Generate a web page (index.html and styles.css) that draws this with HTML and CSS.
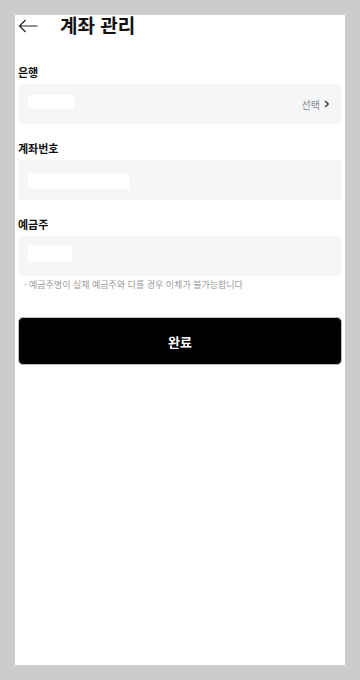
FILE: index.html
```html
<!DOCTYPE html>
<html lang="ko">
  <head>
    <meta charset="UTF-8" />
    <title>계좌 관리</title>
    <meta name="viewport" content="width=device-width, initial-scale=1" />
    <link rel="stylesheet" href="styles.css">
  </head>
  <body>
    <div class="screen">
      <div class="header">
        <svg class="back" width="20" height="14" viewBox="0 0 20 14">
          <path d="M19.5 7H1.5M7.5 1L1.5 7l6 6" fill="none" stroke="#222" stroke-width="1.2" />
        </svg>
        <h1>계좌 관리</h1>
      </div>

      <div class="label">은행</div>
      <div class="field">
        <span class="value" style="width:46px;height:14px"></span>
        <span class="select">선택
          <svg width="6" height="8" viewBox="0 0 6 8">
            <path d="M1.2 1l3 3-3 3" fill="none" stroke="#333" stroke-width="1.4" />
          </svg>
        </span>
      </div>

      <div class="label">계좌번호</div>
      <div class="field">
        <span class="value" style="width:101px;height:15px;margin-top:2px"></span>
      </div>

      <div class="label">예금주</div>
      <div class="field">
        <span class="value" style="width:44px;height:16px"></span>
      </div>
      <div class="note">· 예금주명이 실제 예금주와 다를 경우 이체가 불가능합니다</div>

      <button class="done">완료</button>
    </div>
  </body>
</html>
```

FILE: styles.css
```css
body {
  margin: 0;
  padding: 15px;
  background: #cccccc;
  font-family: "Noto Sans CJK KR", "Noto Sans", sans-serif;
}

.screen {
  width: 324px;
  height: 650px;
  padding: 0 3px;
  background: #fff;
  display: flex;
  flex-direction: column;
}

.header {
  height: 20px;
  display: flex;
  align-items: center;
}

.back {
  margin-top: 1px;
}

h1 {
  margin: 0 0 0 22px;
  font-size: 19px;
  line-height: 20px;
  font-weight: 700;
  color: #111;
}

.label {
  margin-top: 17px;
  font-size: 11px;
  line-height: 14px;
  font-weight: 700;
  color: #111;
}

.header + .label {
  margin-top: 30px;
}

.field {
  margin-top: 5px;
  height: 40px;
  background: #f5f6f8;
  border-radius: 4px;
  padding: 0 12px 0 10px;
  display: flex;
  align-items: center;
  justify-content: space-between;
}

.value {
  display: block;
  background: #fff;
  margin-top: -4px;
}

.select {
  font-size: 10px;
  color: #8a8a8a;
  display: flex;
  align-items: center;
  gap: 4px;
}

.note {
  margin-top: 3px;
  padding-left: 6px;
  font-size: 9px;
  line-height: 12px;
  color: #9a9a9a;
}

.done {
  margin-top: 26px;
  height: 48px;
  border: 1px solid #bbb;
  border-radius: 5px;
  background: #000;
  color: #fff;
  font-family: inherit;
  font-size: 13px;
  font-weight: 700;
}
```
